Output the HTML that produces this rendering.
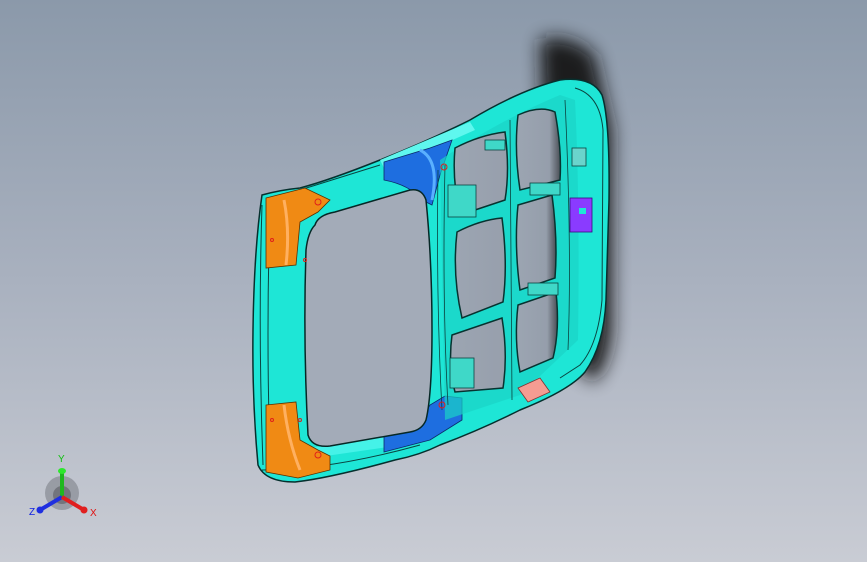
<!DOCTYPE html>
<html><head><style>
html,body{margin:0;padding:0;width:867px;height:562px;overflow:hidden;background:linear-gradient(#8b99aa,#a9b1bf 50%,#c9ccd4);}
svg{position:absolute;left:0;top:0}
</style></head><body>
<svg width="867" height="562" viewBox="0 0 867 562">
<defs>
<filter id="b" x="-50%" y="-50%" width="200%" height="200%"><feGaussianBlur stdDeviation="9"/></filter>
<linearGradient id="hg" x1="0" y1="0" x2="1" y2="0"><stop offset="0" stop-color="#9ca5b2"/><stop offset="0.75" stop-color="#959eab"/><stop offset="1" stop-color="#4a4e55"/></linearGradient>
<linearGradient id="hg2" x1="0" y1="0" x2="1" y2="0"><stop offset="0" stop-color="#9ca5b2"/><stop offset="1" stop-color="#979fac"/></linearGradient>
</defs>
<!-- shadow -->
<path d="M540 40 Q570 32 595 55 L612 130 L612 330 Q608 370 592 382 L560 345 L545 200 Z" fill="#141518" filter="url(#b)" opacity="0.95"/>
<!-- main body -->
<path d="M262 195 Q280 190 300 188 Q330 180 380 160 Q430 140 470 120 Q520 90 560 80 Q592 76 602 95 Q610 120 609 200 L606 300 Q604 345 585 372 Q570 390 520 410 Q480 430 440 445 Q420 455 395 460 Q330 478 295 482 Q265 482 258 465 Q252 400 253 330 Q254 250 262 195 Z" fill="#1ee6d6" stroke="#06302e" stroke-width="1.5"/>
<path d="M575 88 Q600 95 603 130 L602 300 Q598 345 580 365 L560 378" fill="none" stroke="#0a4440" stroke-width="1"/>
<path d="M268 200 Q300 190 380 165 M262 470 Q330 470 420 445 M262 205 Q258 330 263 465 M270 210 Q266 330 270 462" fill="none" stroke="#0a4440" stroke-width="1"/>
<!-- bright cyan strips -->
<path d="M380 160 L470 122 L475 130 L385 170 Z" fill="#5ff7ee"/>
<path d="M310 448 L420 432 L422 442 L312 458 Z" fill="#45f2e8"/>
<!-- orange parts -->
<path d="M266 198 L305 188 L330 200 L318 212 L300 222 L296 265 L266 268 Z" fill="#f08a14" stroke="#5a3000" stroke-width="0.8"/>
<path d="M266 405 L296 402 L300 440 L318 450 L330 456 L330 470 L298 478 L266 472 Z" fill="#f08a14" stroke="#5a3000" stroke-width="0.8"/>
<path d="M284 200 Q290 230 286 265 M284 405 Q288 440 300 470" stroke="#ffb060" stroke-width="3" fill="none"/>
<!-- blue parts -->
<path d="M384 162 L430 148 L452 140 L440 175 L432 205 L422 200 Q410 185 384 180 Z" fill="#1e6ee0" stroke="#0a2a6a" stroke-width="0.8"/>
<path d="M420 150 Q440 160 432 200" stroke="#5ab0ff" stroke-width="3" fill="none"/>
<path d="M384 430 L418 424 L430 405 L445 396 L462 398 L462 420 L430 440 L384 452 Z" fill="#1e6ee0" stroke="#0a2a6a" stroke-width="0.8"/>
<!-- left opening -->
<path d="M315 225 Q318 215 335 212 L410 190 Q422 188 426 200 Q432 260 432 330 Q432 395 426 420 Q422 430 410 432 L330 446 Q312 448 308 435 Q303 340 306 250 Q308 232 315 225 Z" fill="#a3abb8" stroke="#062826" stroke-width="1.5"/>
<!-- right area darker cyan -->
<path d="M440 160 Q500 120 560 95 L575 100 Q580 200 578 340 L520 395 L445 420 Z" fill="#19d3c6" opacity="0.7"/>
<path d="M438 170 Q436 300 442 410 M445 165 Q442 300 448 405 M510 120 L512 400 M565 100 Q572 250 568 350" fill="none" stroke="#0a4440" stroke-width="0.8"/>
<!-- holes -->
<g stroke="#073330" stroke-width="1.5">
<path fill="url(#hg)" d="M518 115 Q540 105 555 112 Q562 150 560 180 L520 190 Q514 150 518 115 Z"/>
<path fill="url(#hg)" d="M518 205 L552 195 Q558 240 555 278 L520 290 Q514 245 518 205 Z"/>
<path fill="url(#hg)" d="M518 305 L556 292 Q560 330 553 358 L520 372 Q514 340 518 305 Z"/>
<path fill="url(#hg2)" d="M455 148 Q480 135 505 132 Q510 170 505 200 L460 215 Q452 180 455 148 Z"/>
<path fill="url(#hg2)" d="M457 232 Q480 220 502 218 Q508 265 503 302 L462 318 Q452 275 457 232 Z"/>
<path fill="url(#hg2)" d="M452 335 L502 318 Q508 355 503 388 L455 392 Q448 365 452 335 Z"/>
</g>
<!-- brackets -->
<g fill="#3fd8c8" stroke="#0a4440" stroke-width="0.8">
<rect x="448" y="185" width="28" height="32"/>
<rect x="450" y="358" width="24" height="30"/>
<rect x="530" y="183" width="30" height="12"/>
<rect x="528" y="283" width="30" height="12"/>
<rect x="485" y="140" width="20" height="10"/>
</g>
<!-- purple, salmon -->
<rect x="570" y="198" width="22" height="34" fill="#8a3bff" stroke="#3a0a80" stroke-width="0.8"/>
<rect x="579" y="208" width="7" height="6" fill="#1ee6d6"/>
<path d="M518 388 L540 378 L550 392 L528 402 Z" fill="#f59c92" stroke="#803030" stroke-width="0.8"/>
<rect x="572" y="148" width="14" height="18" fill="#6ad4cc" stroke="#0a4440" stroke-width="0.8"/>
<!-- red dots -->
<g fill="none" stroke="#e0201a" stroke-width="1">
<circle cx="444" cy="167" r="3"/><circle cx="318" cy="202" r="3"/><circle cx="442" cy="405" r="3"/><circle cx="318" cy="455" r="3"/>
<circle cx="272" cy="240" r="1.5"/><circle cx="272" cy="420" r="1.5"/><circle cx="305" cy="260" r="1.5"/><circle cx="300" cy="420" r="1.5"/>
</g>
</svg>
<!-- triad -->
<svg width="867" height="562" viewBox="0 0 867 562">
<circle cx="62" cy="493" r="17" fill="#7d8088" opacity="0.6"/>
<circle cx="62" cy="495" r="9" fill="#5a5c62" opacity="0.6"/>
<line x1="62" y1="497" x2="62" y2="473" stroke="#1fb81f" stroke-width="4"/>
<ellipse cx="62" cy="471" rx="4" ry="3" fill="#2ee62e"/>
<line x1="62" y1="497" x2="40" y2="510" stroke="#1f2fe0" stroke-width="4"/>
<circle cx="40" cy="510" r="3.5" fill="#1f2fe0"/>
<line x1="62" y1="497" x2="84" y2="510" stroke="#e01f1f" stroke-width="4"/>
<circle cx="84" cy="510" r="3.5" fill="#e01f1f"/>
<text x="58" y="462" font-family="Liberation Sans, sans-serif" font-size="10" fill="#10c010">Y</text>
<text x="29" y="515" font-family="Liberation Sans, sans-serif" font-size="10" fill="#1020e0">Z</text>
<text x="90" y="516" font-family="Liberation Sans, sans-serif" font-size="10" fill="#e01010">X</text>
</svg>
</body></html>
